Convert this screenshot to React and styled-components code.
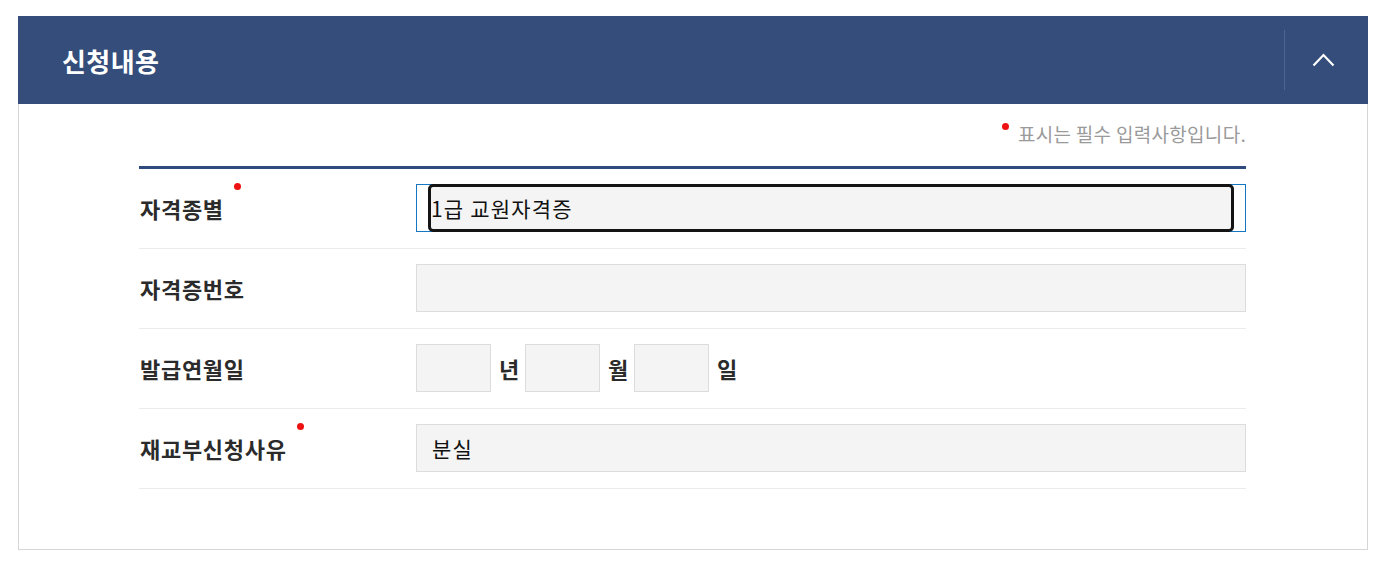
import styled, { createGlobalStyle } from "styled-components";

const colors = {
  navy: "#344d7a",
  navyLine: "#2f4a7c",
  divider: "#4d6590",
  border: "#d6d6d6",
  rowLine: "#ebebeb",
  field: "#f4f4f4",
  fieldBorder: "#dcdcdc",
  red: "#ee1111",
  text: "#2b2b2b",
  muted: "#9a9a9a",
};

const GlobalStyle = createGlobalStyle`
  body {
    margin: 0;
    background: #fff;
    font-family: "Noto Sans CJK KR", "Noto Sans", sans-serif;
  }
  * { box-sizing: border-box; }
`;

const Page = styled.div`
  padding: 16px 5px 0 18px;
`;

const Panel = styled.section`
  border: 1px solid ${colors.border};
  border-top: none;
`;

const Header = styled.header`
  display: flex;
  align-items: center;
  height: 88px;
  margin: 0 -1px;
  background: ${colors.navy};
`;

const Title = styled.h2`
  flex: 1;
  margin: 0;
  padding-left: 44px;
  color: #fff;
  font-size: 26px;
  font-weight: 700;
  letter-spacing: 0.4px;
`;

const Toggle = styled.button`
  display: flex;
  align-items: center;
  justify-content: center;
  width: 84px;
  height: 60px;
  padding: 0 6px 0 0;
  border: none;
  border-left: 1px solid ${colors.divider};
  background: transparent;
  cursor: pointer;
`;

const Body = styled.div`
  padding: 17px 121px 60px 120px;
`;

const Notice = styled.p`
  margin: 0 0 19px;
  height: 26px;
  line-height: 26px;
  text-align: right;
  font-size: 19px;
  color: ${colors.muted};
  letter-spacing: 0.3px;
`;

const Dot = styled.span`
  display: inline-block;
  width: 7px;
  height: 7px;
  margin-right: 9px;
  border-radius: 50%;
  background: ${colors.red};
  vertical-align: 12px;
`;

const Table = styled.div`
  border-top: 3px solid ${colors.navyLine};
`;

const Row = styled.div`
  display: flex;
  align-items: center;
  height: 80px;
  padding-bottom: 1px;
  border-bottom: 1px solid ${colors.rowLine};
`;

const Label = styled.div`
  width: 277px;
  padding-left: 1px;
  font-size: 22px;
  font-weight: 700;
  color: ${colors.text};
  letter-spacing: 0.7px;

  span {
    position: relative;
  }

  span::after {
    content: ${(p) => (p.$required ? '""' : "none")};
    position: absolute;
    top: -9px;
    right: -17px;
    width: 7px;
    height: 7px;
    border-radius: 50%;
    background: ${colors.red};
  }
`;

const Field = styled.div`
  flex: 1;
  display: flex;
  align-items: center;
  gap: 8px;
`;

const TextBox = styled.input`
  width: ${(p) => p.$width || "100%"};
  height: 48px;
  padding: 0 15px;
  border: 1px solid ${colors.fieldBorder};
  background: ${colors.field};
  font-family: inherit;
  font-size: 21px;
  letter-spacing: 1.2px;
  color: #111;
  outline: none;
`;

const SelectFrame = styled.div`
  width: 100%;
  height: 48px;
  padding: 0 11px;
  border: 1px solid #1577c2;
  background: #fff;
`;

const SelectFocus = styled.div`
  height: 48px;
  margin-top: -1px;
  border: 3px solid #141414;
  border-radius: 5px;
  background: ${colors.field};
  display: flex;
  align-items: center;
  font-size: 21px;
  letter-spacing: 1.2px;
  color: #111;
`;

const Unit = styled.span`
  width: 18px;
  white-space: nowrap;
  font-size: 22px;
  font-weight: 700;
  color: ${colors.text};
`;

const ChevronUp = () => (
  <svg width="23" height="14" viewBox="0 0 23 14">
    <polyline
      points="1.5,12.5 11.5,2 21.5,12.5"
      fill="none"
      stroke="#fff"
      strokeWidth="2.2"
    />
  </svg>
);

const App = () => {
  return (
    <Page>
      <GlobalStyle />
      <Panel>
        <Header>
          <Title>신청내용</Title>
          <Toggle aria-label="접기">
            <ChevronUp />
          </Toggle>
        </Header>
        <Body>
          <Notice>
            <Dot />
            표시는 필수 입력사항입니다.
          </Notice>
          <Table>
            <Row>
              <Label $required>
                <span>자격종별</span>
              </Label>
              <Field>
                <SelectFrame>
                  <SelectFocus>1급 교원자격증</SelectFocus>
                </SelectFrame>
              </Field>
            </Row>
            <Row>
              <Label>
                <span>자격증번호</span>
              </Label>
              <Field>
                <TextBox readOnly value="" />
              </Field>
            </Row>
            <Row>
              <Label>
                <span>발급연월일</span>
              </Label>
              <Field>
                <TextBox $width="75px" readOnly value="" />
                <Unit>년</Unit>
                <TextBox $width="75px" readOnly value="" />
                <Unit>월</Unit>
                <TextBox $width="75px" readOnly value="" />
                <Unit>일</Unit>
              </Field>
            </Row>
            <Row>
              <Label $required>
                <span>재교부신청사유</span>
              </Label>
              <Field>
                <TextBox readOnly value="분실" />
              </Field>
            </Row>
          </Table>
        </Body>
      </Panel>
    </Page>
  );
};

export default App;
